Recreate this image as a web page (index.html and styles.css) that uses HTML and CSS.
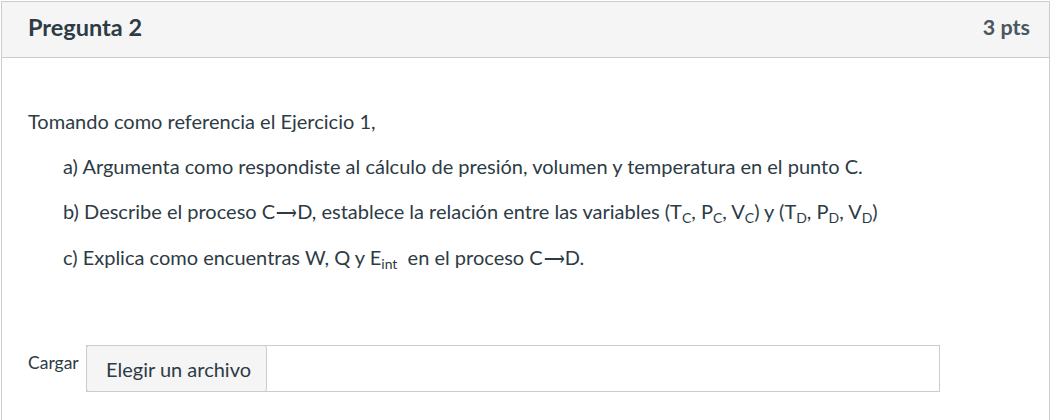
FILE: index.html
```html
<!DOCTYPE html>
<html lang="es">
<head>
<meta charset="utf-8">
<link rel="stylesheet" href="styles.css">
</head>
<body>
<div class="question">
  <div class="header">
    <h2 class="title">Pregunta 2</h2>
    <div class="points">3 pts</div>
  </div>
  <div class="content">
    <p class="intro">Tomando como referencia el Ejercicio 1,</p>
    <p class="item">a) Argumenta como respondiste al cálculo de presión, volumen y temperatura en el punto C.</p>
    <p class="item">b) Describe el proceso C<span class="arrow">⟶</span>D, establece la relación entre las variables (T<sub>C</sub>, P<sub>C</sub>, V<sub>C</sub>) y (T<sub>D</sub>, P<sub>D</sub>, V<sub>D</sub>)</p>
    <p class="item">c) Explica como encuentras W, Q y E<sub>int</sub>&nbsp; en el proceso C<span class="arrow">⟶</span>D.</p>
  </div>
  <div class="upload">
    <span class="label">Cargar</span>
    <div class="file">
      <span class="btn">Elegir un archivo</span>
    </div>
  </div>
</div>
</body>
</html>
```
FILE: styles.css
```css
html, body {
  margin: 0;
  padding: 0;
  background: #fff;
}
body {
  font-family: Lato, "Liberation Sans", sans-serif;
  color: #2d3b45;
}
.question {
  margin: 1px 1px 0 1px;
  border: 1px solid #c7cdd1;
  border-bottom: none;
  height: 419px;
  box-sizing: border-box;
}
.header {
  display: flex;
  align-items: center;
  justify-content: space-between;
  height: 56px;
  box-sizing: border-box;
  padding: 0 19px 5px 26px;
  background: #f5f5f5;
  border-bottom: 1px solid #c7cdd1;
}
.title {
  margin: 0;
  font-size: 23.5px;
  font-weight: 700;
}
.points {
  font-size: 21.5px;
  font-weight: 700;
  color: #4a5660;
}
.content {
  padding: 51px 26px 0 26px;
  font-size: 20px;
}
.content p {
  margin: 0 0 20px 0;
  line-height: 25px;
}
.item {
  padding-left: 35px;
}
.arrow {
  display: inline-block;
  font-size: 17px;
  transform: scaleX(0.85);
  margin: 0 -1px;
}
sub {
  font-size: 14px;
  vertical-align: -4px;
  line-height: 0;
}
.upload {
  display: flex;
  align-items: flex-start;
  padding: 54px 0 0 26px;
}
.label {
  font-size: 17.5px;
  margin-top: 7px;
  width: 58px;
}
.file {
  width: 854px;
  height: 47px;
  box-sizing: border-box;
  border: 1px solid #c7cdd1;
  display: flex;
}
.btn {
  display: flex;
  align-items: center;
  padding: 0 0 0 19px;
  width: 181px;
  box-sizing: border-box;
  white-space: nowrap;
  margin: -1px 0 -1px -1px;
  background: #f5f5f5;
  border: 1px solid #c7cdd1;
  border-radius: 3px;
  font-size: 20px;
}
```
